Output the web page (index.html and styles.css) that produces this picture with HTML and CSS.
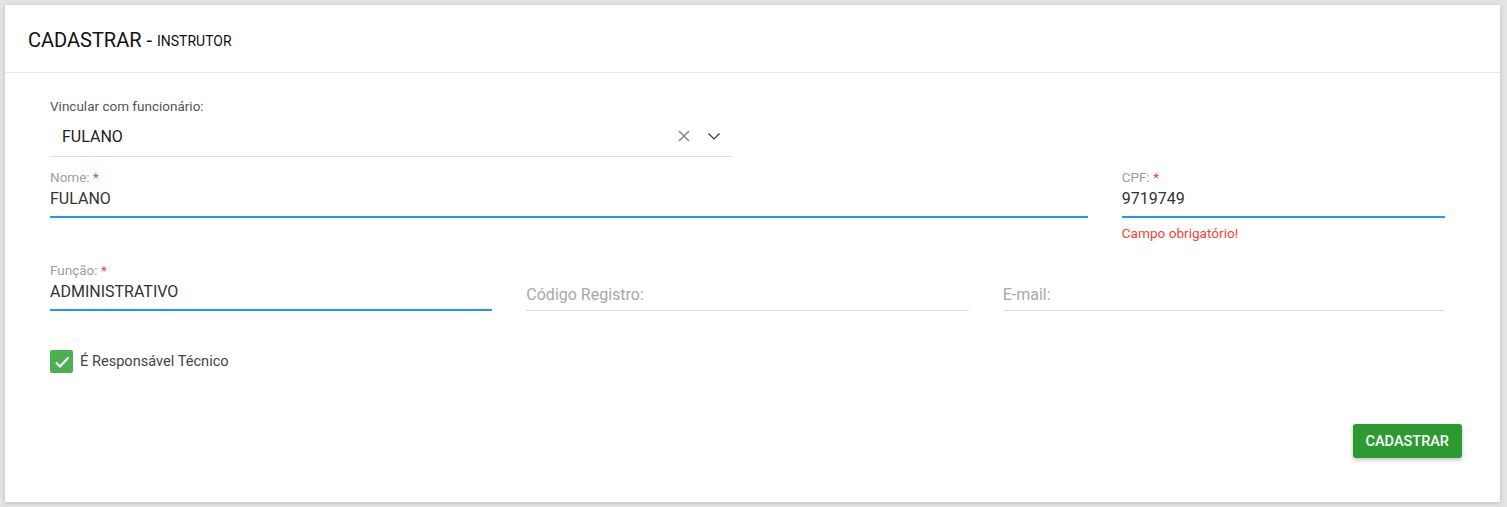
FILE: index.html
```html
<!DOCTYPE html>
<html lang="pt-BR">
<head>
<meta charset="utf-8">
<title>Cadastrar - Instrutor</title>
<link rel="stylesheet" href="styles.css">
</head>
<body>
<div class="card">
  <div class="card-header">
    <span class="title">CADASTRAR</span><span class="dash"> - </span><span class="subtitle">INSTRUTOR</span>
  </div>
  <div class="card-body">
    <div class="grid">
      <div class="select-field span-6">
        <div class="select-label">Vincular com funcionário:</div>
        <div class="select-box">
          <span class="select-value">FULANO</span>
          <span class="select-icons">
            <svg class="icon-x" width="14" height="14" viewBox="0 0 14 14"><path d="M2 2 L12 12 M12 2 L2 12" stroke="#8a8a8a" stroke-width="1.6" fill="none"/></svg>
            <svg class="icon-chev" width="14" height="14" viewBox="0 0 14 14"><path d="M1.5 4.5 L7 10 L12.5 4.5" stroke="#333" stroke-width="1.2" fill="none"/></svg>
          </span>
        </div>
      </div>
    </div>

    <div class="grid row">
      <div class="field span-9">
        <div class="label">Nome: <span class="req">*</span></div>
        <div class="input focused">FULANO</div>
        <div class="helper"></div>
      </div>
      <div class="field span-3">
        <div class="label">CPF: <span class="req">*</span></div>
        <div class="input focused">9719749</div>
        <div class="helper error">Campo obrigatório!</div>
      </div>
    </div>

    <div class="grid row">
      <div class="field span-4">
        <div class="label">Função: <span class="req">*</span></div>
        <div class="input focused">ADMINISTRATIVO</div>
        <div class="helper"></div>
      </div>
      <div class="field span-4">
        <div class="label"></div>
        <div class="input empty">Código Registro:</div>
        <div class="helper"></div>
      </div>
      <div class="field span-4">
        <div class="label"></div>
        <div class="input empty">E-mail:</div>
        <div class="helper"></div>
      </div>
    </div>

    <div class="check-row">
      <span class="checkbox">
        <svg width="22" height="22" viewBox="0 0 22 22"><path d="M5 11.5 L9 15.5 L17.5 6.5" stroke="#fff" stroke-width="2.2" fill="none"/></svg>
      </span>
      <span class="check-label">É Responsável Técnico</span>
    </div>

    <div class="actions">
      <button class="btn">CADASTRAR</button>
    </div>
  </div>
</div>
</body>
</html>
```

FILE: styles.css
```css
* { box-sizing: border-box; }
html, body { margin: 0; padding: 0; }
body {
  background: #e3e3e3;
  font-family: Roboto, "Liberation Sans", Arial, sans-serif;
  color: #333;
  width: 1507px;
  height: 507px;
  overflow: hidden;
}
.card {
  margin: 5px 0 0 5px;
  width: 1495px;
  height: 497px;
  background: #fff;
  box-shadow: 0 1px 4px rgba(0,0,0,0.18);
}
.card-header {
  height: 68px;
  border-bottom: 1px solid #e8e8e8;
  padding-left: 23px;
  display: flex;
  align-items: center;
  padding-top: 2px;
  color: #111;
}
.title { font-size: 20px; }
.dash { font-size: 20px; white-space: pre; }
.subtitle { font-size: 14px; margin-top: 3px; }
.card-body {
  padding: 25px 55px 0 45px;
}
.grid {
  display: grid;
  grid-template-columns: repeat(12, 1fr);
  column-gap: 34px;
}
.span-3 { grid-column: span 3; }
.span-4 { grid-column: span 4; }
.span-6 { grid-column: span 6; }
.span-9 { grid-column: span 9; }

.select-label {
  font-size: 13.5px;
  line-height: 16px;
  color: #555;
}
.select-box {
  margin-top: 2px;
  height: 41px;
  border-bottom: 1px solid #ddd;
  display: flex;
  align-items: center;
  padding-left: 12px;
  padding-right: 10px;
}
.select-value {
  flex: 1;
  font-size: 16px;
  color: #222;
}
.select-icons {
  display: flex;
  align-items: center;
  gap: 16px;
}

.row { margin-top: 12px; }
.row + .row { margin-top: 21px; }
.field { display: flex; flex-direction: column; }
.label {
  font-size: 13.5px;
  line-height: 16px;
  height: 16px;
  color: #9e9e9e;
}
.req { color: #f44336; }
.input {
  margin-top: 4px;
  font-size: 16px;
  line-height: 20px;
  color: #333;
}
.input.focused {
  padding-bottom: 7px;
  border-bottom: 2px solid #2196f3;
}
.input.empty {
  color: #a8a8a8;
  padding-top: 3px;
  padding-bottom: 5px;
  border-bottom: 1px solid #ddd;
}
.helper {
  margin-top: 7px;
  height: 16px;
  font-size: 13.6px;
  line-height: 16px;
}
.helper.error { color: #f44336; }

.check-row {
  margin-top: 16px;
  display: flex;
  align-items: center;
  gap: 7px;
}
.checkbox {
  width: 23px;
  height: 23px;
  border-radius: 2px;
  background: #4caf50;
  display: flex;
  align-items: center;
  justify-content: center;
}
.check-label {
  font-size: 14.6px;
  color: #444;
  margin-top: -2px;
}
.actions {
  display: flex;
  justify-content: flex-end;
  margin-top: 51px;
  margin-right: -17px;
}
.btn {
  height: 34px;
  padding: 0 13px;
  background: #2c9a30;
  color: #fff;
  border: none;
  border-radius: 3px;
  font-family: Roboto, "Liberation Sans", Arial, sans-serif;
  font-size: 14.5px;
  font-weight: 500;
  box-shadow: 0 2px 4px rgba(0,0,0,0.25);
}
```
